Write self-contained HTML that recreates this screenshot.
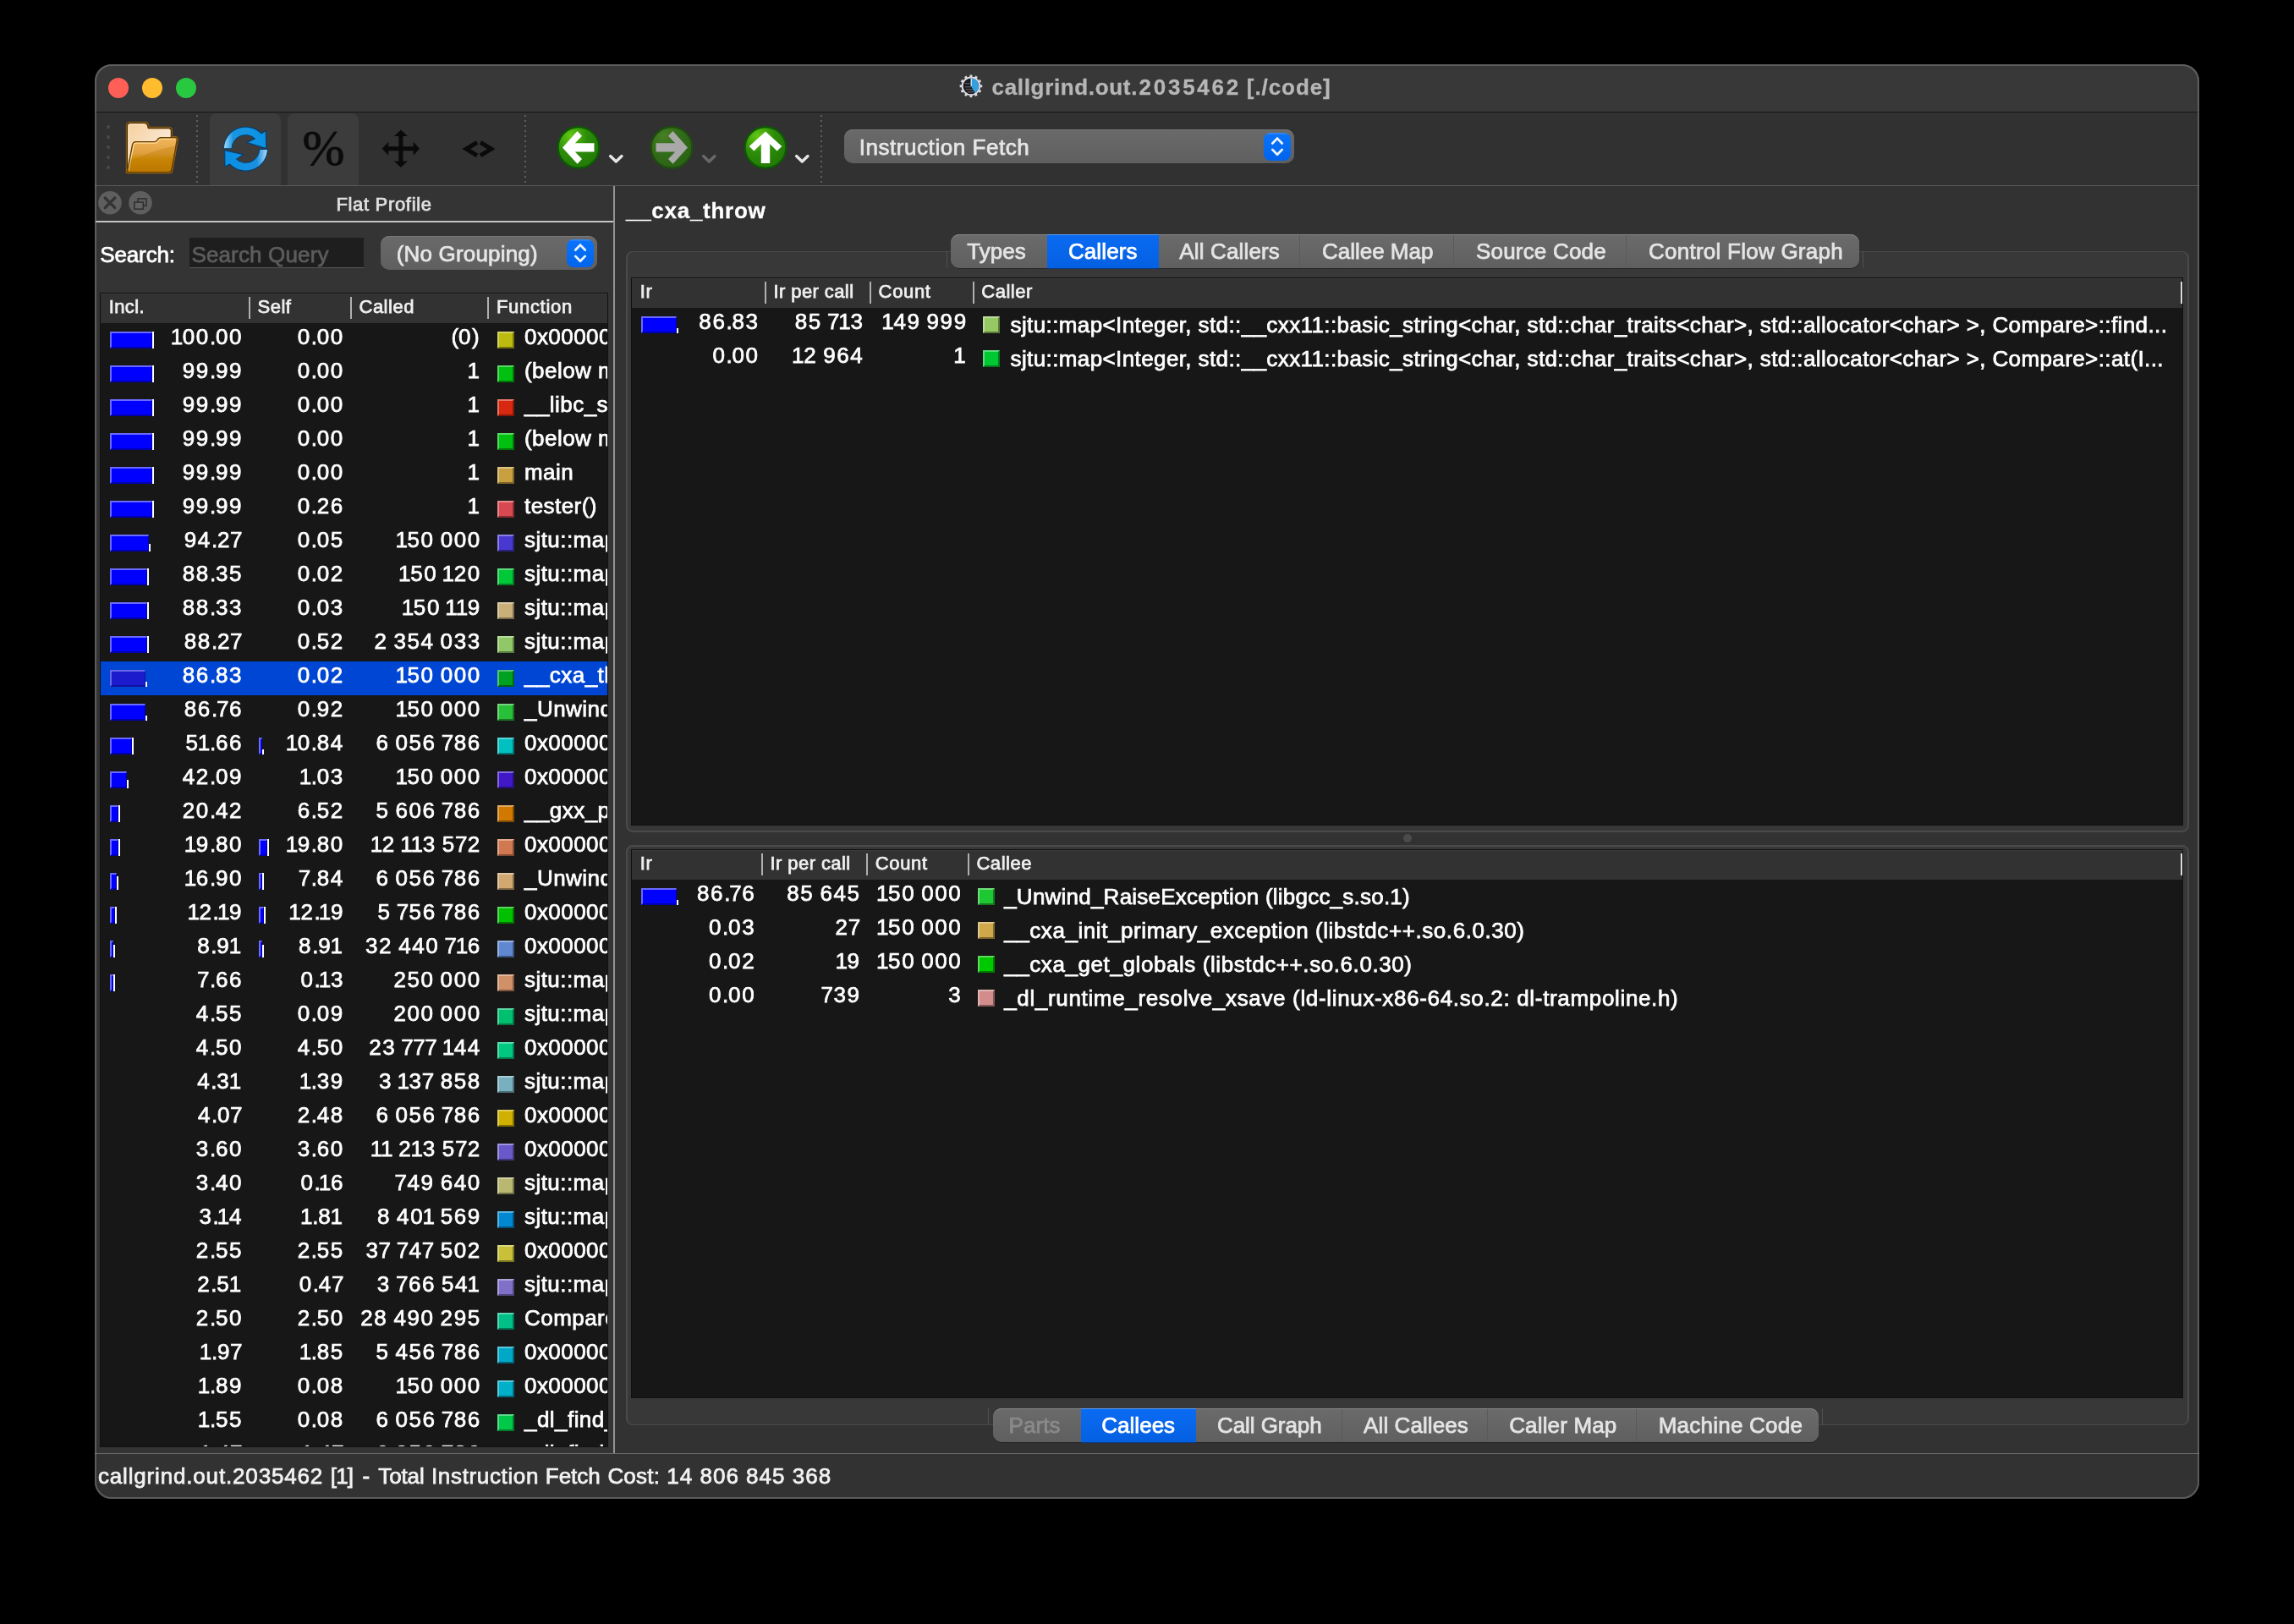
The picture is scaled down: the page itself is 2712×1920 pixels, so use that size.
<!DOCTYPE html>
<html><head><meta charset="utf-8"><title>callgrind.out.2035462 [./code]</title>
<style>
html,body{margin:0;padding:0;background:#000;width:2712px;height:1920px;overflow:hidden;}
body{font-family:"Liberation Sans",sans-serif;}
#win{will-change:transform;position:absolute;left:112px;top:76px;width:2488px;height:1696px;background:#323232;border-radius:20px;overflow:hidden;}
#win div,#win span,#win svg{position:absolute;}
#edge{position:absolute;left:112px;top:76px;width:2488px;height:1696px;border-radius:20px;box-sizing:border-box;border:2px solid rgba(140,140,140,.46);pointer-events:none;}
.t{white-space:pre;line-height:1;color:#fff;-webkit-text-stroke:0.75px currentColor;}
.n{font-size:26px;letter-spacing:1.6px;word-spacing:-1.82px;}
.n u{text-decoration:none;letter-spacing:0.5px;margin-left:-0.96px;}
.n b{font-weight:normal;letter-spacing:-0.36px;margin-left:-1.7px;}
.n i{font-style:normal;letter-spacing:-0.22px;}
.clip{overflow:hidden;}
.hdr{background:#323232;box-shadow:inset 0 1px 0 #3b3b3b;}
.sq{box-sizing:border-box;border-top:2px solid rgba(255,255,255,.36);border-left:2px solid rgba(255,255,255,.36);border-bottom:2px solid rgba(0,0,0,.38);border-right:2px solid rgba(0,0,0,.38);}
.dots{background:repeating-linear-gradient(#5e5e5e 0 2px,transparent 2px 6px);}
.step{background:linear-gradient(#3b8ffb 0,#0a72fa 8%,#0064ec);border-radius:8px;}
</style></head><body>
<div id="win">
<div style="left:0px;top:0px;width:2488px;height:56px;background:#383838;"></div>
<div style="left:0px;top:56px;width:2488px;height:1px;background:#151515;"></div>
<div style="left:16px;top:16px;width:24px;height:24px;background:#ff5f57;border-radius:50%;"></div>
<div style="left:56px;top:16px;width:24px;height:24px;background:#febc2e;border-radius:50%;"></div>
<div style="left:96px;top:16px;width:24px;height:24px;background:#28c840;border-radius:50%;"></div>
<span class="t" style="top:13.79px;font-size:26px;color:#b6b6b6;font-weight:bold;letter-spacing:0.657px;left:1060.60px;-webkit-text-stroke-width:0.3px;">callgrind.out.</span>
<span class="t" style="top:13.79px;font-size:26px;color:#b6b6b6;font-weight:bold;letter-spacing:2.755px;left:1234.50px;-webkit-text-stroke-width:0.3px;">2035462</span>
<span class="t" style="top:13.79px;font-size:26px;color:#b6b6b6;font-weight:bold;letter-spacing:0.928px;left:1361.80px;-webkit-text-stroke-width:0.3px;">[./code]</span>
<svg style="left:1020px;top:10px;" width="32" height="32" viewBox="1132 86 32 32"><rect x="1146.45" y="88.50" width="2.9" height="3.4" fill="#dadae2" transform="rotate(0 1147.9 101.8)"/><rect x="1146.45" y="88.50" width="2.9" height="3.4" fill="#dadae2" transform="rotate(30 1147.9 101.8)"/><rect x="1146.45" y="88.50" width="2.9" height="3.4" fill="#dadae2" transform="rotate(60 1147.9 101.8)"/><rect x="1146.45" y="88.50" width="2.9" height="3.4" fill="#dadae2" transform="rotate(90 1147.9 101.8)"/><rect x="1146.45" y="88.50" width="2.9" height="3.4" fill="#dadae2" transform="rotate(120 1147.9 101.8)"/><rect x="1146.45" y="88.50" width="2.9" height="3.4" fill="#dadae2" transform="rotate(150 1147.9 101.8)"/><rect x="1146.45" y="88.50" width="2.9" height="3.4" fill="#dadae2" transform="rotate(180 1147.9 101.8)"/><rect x="1146.45" y="88.50" width="2.9" height="3.4" fill="#dadae2" transform="rotate(210 1147.9 101.8)"/><rect x="1146.45" y="88.50" width="2.9" height="3.4" fill="#dadae2" transform="rotate(240 1147.9 101.8)"/><rect x="1146.45" y="88.50" width="2.9" height="3.4" fill="#dadae2" transform="rotate(270 1147.9 101.8)"/><rect x="1146.45" y="88.50" width="2.9" height="3.4" fill="#dadae2" transform="rotate(300 1147.9 101.8)"/><rect x="1146.45" y="88.50" width="2.9" height="3.4" fill="#dadae2" transform="rotate(330 1147.9 101.8)"/>
<circle cx="1147.9" cy="101.8" r="10.3" fill="#1b1b1f" stroke="#dadae2" stroke-width="1.9"/>
<path d="M1147.9 101.8 L1147.9 92.6 A9.2 9.2 0 0 1 1152.50 109.77 Z" fill="#379fe0"/>
<path d="M1148.2 92.8 L1148.2 101.8" stroke="#d8f4ff" stroke-width="1.2"/>
<path d="M1140.9 98.8h6M1140.9 102.8h7M1141.9 105.8h8M1143.9 108.8h7" stroke="#8a8a90" stroke-width="1" opacity=".7"/></svg>
<div style="left:0px;top:57px;width:2488px;height:86px;background:#313131;"></div>
<div style="left:0px;top:143px;width:2488px;height:1px;background:#5a5a5a;"></div>
<div style="left:14px;top:72px;width:4px;height:4px;background:#4a4a4a;border-radius:50%;"></div>
<div style="left:14px;top:84px;width:4px;height:4px;background:#4a4a4a;border-radius:50%;"></div>
<div style="left:14px;top:96px;width:4px;height:4px;background:#4a4a4a;border-radius:50%;"></div>
<div style="left:14px;top:108px;width:4px;height:4px;background:#4a4a4a;border-radius:50%;"></div>
<div style="left:14px;top:120px;width:4px;height:4px;background:#4a4a4a;border-radius:50%;"></div>
<div class="dots" style="left:120px;top:60px;width:2px;height:80px;"></div>
<div class="dots" style="left:508px;top:60px;width:2px;height:80px;"></div>
<div class="dots" style="left:858px;top:60px;width:2px;height:80px;"></div>
<div style="left:136px;top:58px;width:84px;height:85px;background:#3c3c3c;border-radius:8px 8px 0 0;"></div>
<div style="left:228px;top:58px;width:84px;height:85px;background:#3c3c3c;border-radius:8px 8px 0 0;"></div>
<svg style="left:34px;top:65px;" width="68" height="66" viewBox="146 141 68 66"><defs>
<linearGradient id="fb" x1="0" y1="0" x2="1" y2="1"><stop offset="0" stop-color="#f5cf98"/><stop offset=".6" stop-color="#fae6d2"/><stop offset="1" stop-color="#f8e0c0"/></linearGradient>
<linearGradient id="ff" x1="0" y1="0" x2="0" y2="1"><stop offset="0" stop-color="#f3b75c"/><stop offset=".45" stop-color="#dfa040"/><stop offset=".62" stop-color="#cc8a08"/><stop offset="1" stop-color="#b97500"/></linearGradient>
</defs>
<path d="M150.5 203 L150.5 148.5 Q150.5 145.5 153.5 145.5 L171.5 145.5 Q174 145.5 174.5 148 L175.5 151.5 L199.5 151.5 Q202.5 151.5 202.5 154.5 L202.5 203 Z" fill="none" stroke="#c98a10" stroke-width="3.4" stroke-linejoin="round" opacity=".55"/>
<path d="M150.3 203.6 L156.6 171 Q157.4 167.6 160.5 167.6 L183 167.6 Q185 167.6 186 165.5 Q187.4 162.7 190.5 162.7 L207 162.7 Q209.6 162.7 209.2 165.5 L203 200 Q202.3 203.6 199 203.6 Z" fill="none" stroke="#c98a10" stroke-width="3.4" stroke-linejoin="round" opacity=".55"/>
<path d="M150.5 203 L150.5 148.5 Q150.5 145.5 153.5 145.5 L171.5 145.5 Q174 145.5 174.5 148 L175.5 151.5 L199.5 151.5 Q202.5 151.5 202.5 154.5 L202.5 203 Z" fill="url(#fb)" stroke="#5a3200" stroke-width="1.6" stroke-linejoin="round"/>
<path d="M152 201 L152 149 Q152 147 154 147 L171 147" fill="none" stroke="#fff6e0" stroke-width="1.2" opacity=".9"/>
<path d="M150.3 203.6 L156.6 171 Q157.4 167.6 160.5 167.6 L183 167.6 Q185 167.6 186 165.5 Q187.4 162.7 190.5 162.7 L207 162.7 Q209.6 162.7 209.2 165.5 L203 200 Q202.3 203.6 199 203.6 Z" fill="url(#ff)" stroke="#6a3c00" stroke-width="1.4" stroke-linejoin="round"/>
<path d="M152.2 201.5 L158 171.6 Q158.6 169.2 161 169.2 L183.5 169.2 Q186 169.2 187.2 166.8 Q188.2 164.3 191 164.3 L207.5 164.3" fill="none" stroke="#ffe9b0" stroke-width="1.1" opacity=".85"/>
<path d="M152 203 L154.5 190 Q180 178 206.5 172.5 L202 200 Q201.6 203 199 203 Z" fill="#c07c00" opacity=".35"/></svg>
<svg style="left:148px;top:70px;" width="62" height="62" viewBox="260 146 62 62"><defs>
<linearGradient id="ru" x1="0" y1="0" x2="1" y2="0"><stop offset="0" stop-color="#a9dcf7"/><stop offset=".22" stop-color="#1a95e0"/><stop offset="1" stop-color="#0a92e6"/></linearGradient>
<linearGradient id="rd" x1="1" y1="0" x2="0" y2="0"><stop offset="0" stop-color="#b4dcf8"/><stop offset=".25" stop-color="#1a8fe0"/><stop offset="1" stop-color="#0a90e4"/></linearGradient>
</defs>
<path d="M264.40 175.55 A26.0 26.0 0 0 1 309.10 157.94 L314.2 154.3 L314.8 175.5 L292 168.6 L301.31 163.89 A16.3 16.3 0 0 0 274.10 175.72 Z" fill="url(#ru)" stroke="#053f6e" stroke-width="1.1" stroke-linejoin="round"/>
<path d="M316.40 176.45 A26.0 26.0 0 0 1 271.70 194.06 L266.0 197.0 L265.6 177.6 L287.6 182.6 L279.49 188.11 A16.3 16.3 0 0 0 306.70 176.28 Z" fill="url(#rd)" stroke="#053f6e" stroke-width="1.1" stroke-linejoin="round"/></svg>
<span class="t" style="left:245.5px;top:69px;font-family:'Liberation Serif',serif;font-size:60px;color:#0b0b0b;line-height:1;-webkit-text-stroke:0.8px #0b0b0b;">%</span>
<svg style="left:336px;top:74px;" width="52" height="52" viewBox="448 150 52 52"><path transform="rotate(0 473.9 175.8)" d="M471.4 175.8 L471.4 161.10000000000002 L465.9 161.10000000000002 L473.9 153.60000000000002 L481.9 161.10000000000002 L476.4 161.10000000000002 L476.4 175.8 Z" fill="#0a0a0a"/><path transform="rotate(90 473.9 175.8)" d="M471.4 175.8 L471.4 161.10000000000002 L465.9 161.10000000000002 L473.9 153.60000000000002 L481.9 161.10000000000002 L476.4 161.10000000000002 L476.4 175.8 Z" fill="#0a0a0a"/><path transform="rotate(180 473.9 175.8)" d="M471.4 175.8 L471.4 161.10000000000002 L465.9 161.10000000000002 L473.9 153.60000000000002 L481.9 161.10000000000002 L476.4 161.10000000000002 L476.4 175.8 Z" fill="#0a0a0a"/><path transform="rotate(270 473.9 175.8)" d="M471.4 175.8 L471.4 161.10000000000002 L465.9 161.10000000000002 L473.9 153.60000000000002 L481.9 161.10000000000002 L476.4 161.10000000000002 L476.4 175.8 Z" fill="#0a0a0a"/></svg>
<svg style="left:428px;top:84px;" width="52" height="32" viewBox="540 160 52 32"><path d="M564 168.4 L551.3 176.1 L564 183.8" fill="none" stroke="#0a0a0a" stroke-width="5"/><path d="M568 168.4 L580.7 176.1 L568 183.8" fill="none" stroke="#0a0a0a" stroke-width="5"/></svg>
<svg style="left:544.3px;top:70px;" width="56" height="58" viewBox="656.3 146 56 58"><defs><radialGradient id="gl" cx=".3" cy=".22" r=".75"><stop offset="0" stop-color="#62c812"/><stop offset=".55" stop-color="#2e8c0a"/><stop offset="1" stop-color="#237d06"/></radialGradient></defs><circle cx="684.3" cy="174.4" r="24.3" fill="url(#gl)" stroke="#0b5a02" stroke-width="2.2"/><polygon points="665.3,174.4 682.8,155.1 688.3,160.8 680.1,169.2 702.8,169.2 702.8,179.6 680.1,179.6 688.3,188.0 682.8,193.7" fill="#ffffff" transform="rotate(0 684.3 174.4)"/></svg>
<svg style="left:605.7px;top:104px;" width="22" height="16" viewBox="717.7 180 22 16"><path d="M721.3000000000001 184.6 L728.0 191 L734.7 184.6" fill="none" stroke="#e6e6e6" stroke-width="3.4" stroke-linecap="round" stroke-linejoin="round"/></svg>
<svg style="left:654.4px;top:70px;" width="56" height="58" viewBox="766.4 146 56 58"><defs><radialGradient id="gr" cx=".3" cy=".22" r=".75"><stop offset="0" stop-color="#467f24"/><stop offset=".55" stop-color="#336c1a"/><stop offset="1" stop-color="#2c6416"/></radialGradient></defs><circle cx="794.4" cy="174.4" r="24.3" fill="url(#gr)" stroke="#1d4f0c" stroke-width="2.2"/><polygon points="775.4,174.4 792.9,155.1 798.4,160.8 790.2,169.2 812.9,169.2 812.9,179.6 790.2,179.6 798.4,188.0 792.9,193.7" fill="#a9a9a9" transform="rotate(180 794.4 174.4)"/></svg>
<svg style="left:715.8px;top:104px;" width="22" height="16" viewBox="827.8 180 22 16"><path d="M831.4 184.6 L838.0999999999999 191 L844.8 184.6" fill="none" stroke="#686868" stroke-width="3.4" stroke-linecap="round" stroke-linejoin="round"/></svg>
<svg style="left:764.5px;top:70px;" width="56" height="58" viewBox="876.5 146 56 58"><defs><radialGradient id="gu" cx=".3" cy=".22" r=".75"><stop offset="0" stop-color="#62c812"/><stop offset=".55" stop-color="#2e8c0a"/><stop offset="1" stop-color="#237d06"/></radialGradient></defs><circle cx="904.5" cy="174.4" r="24.3" fill="url(#gu)" stroke="#0b5a02" stroke-width="2.2"/><polygon points="885.5,174.4 903.0,155.1 908.5,160.8 900.3,169.2 923.0,169.2 923.0,179.6 900.3,179.6 908.5,188.0 903.0,193.7" fill="#ffffff" transform="rotate(90 904.5 174.4)"/></svg>
<svg style="left:825.7px;top:104px;" width="22" height="16" viewBox="937.7 180 22 16"><path d="M941.3000000000001 184.6 L948.0 191 L954.7 184.6" fill="none" stroke="#e6e6e6" stroke-width="3.4" stroke-linecap="round" stroke-linejoin="round"/></svg>
<div style="left:886px;top:77px;width:532px;height:40px;background:linear-gradient(#6a6a6a,#5f5f5f);border-radius:10px;box-shadow:inset 0 1px 0 #787878;"></div>
<div class="step" style="left:1382px;top:81px;width:32px;height:33px;"></div>
<svg style="left:1382px;top:81px;" width="32" height="33" viewBox="1494 157 32 33"><path d="M1504.3 169.5 L1510 163.6 L1515.7 169.5 M1504.3 176.9 L1510 182.8 L1515.7 176.9" fill="none" stroke="#eaf5ff" stroke-width="2.8" stroke-linecap="round" stroke-linejoin="round"/></svg>
<span class="t" style="top:84.99px;font-size:26px;color:#e6e6e6;letter-spacing:0.555px;left:903.70px;">Instruction Fetch</span>
<div style="left:1px;top:144px;width:612px;height:1498px;background:#343434;"></div>
<div style="left:613px;top:144px;width:2px;height:1498px;background:#939393;"></div>
<div style="left:1px;top:185px;width:612px;height:2px;background:#c4c4c4;"></div>
<span class="t" style="top:155.18px;font-size:22px;color:#e0e0e0;letter-spacing:0.678px;left:285.40px;">Flat Profile</span>
<svg style="left:3px;top:149px;" width="30" height="30" viewBox="115 225 30 30"><circle cx="130" cy="239.8" r="13.8" fill="#5e5e5e"/><path d="M124.2 234 L135.8 245.6 M135.8 234 L124.2 245.6" stroke="#333" stroke-width="3.2" stroke-linecap="round"/></svg><svg style="left:39px;top:149px;" width="30" height="30" viewBox="151 225 30 30"><circle cx="166" cy="239.8" r="13.8" fill="#5e5e5e"/><rect x="163" y="234.9" width="10" height="8.4" fill="none" stroke="#303030" stroke-width="1.6"/><rect x="158.9" y="239" width="10.4" height="8.2" fill="#626262" stroke="#303030" stroke-width="1.6"/></svg>
<span class="t" style="top:211.99px;font-size:26px;color:#fff;letter-spacing:-0.146px;left:6.30px;">Search:</span>
<div style="left:112px;top:205px;width:206px;height:36px;background:#1e1e1e;border-bottom:1px solid #555;box-sizing:border-box;"></div>
<span class="t" style="top:211.99px;font-size:26px;color:#5c5c5c;letter-spacing:0.149px;left:114.40px;">Search Query</span>
<div style="left:338px;top:203px;width:256px;height:40px;background:linear-gradient(#6a6a6a,#5f5f5f);border-radius:10px;box-shadow:inset 0 1px 0 #787878;"></div>
<div class="step" style="left:558px;top:207px;width:32px;height:33px;"></div>
<svg style="left:558px;top:207px;" width="32" height="33" viewBox="670 283 32 33"><path d="M680.3 295.5 L686 289.6 L691.7 295.5 M680.3 302.9 L686 308.8 L691.7 302.9" fill="none" stroke="#eaf5ff" stroke-width="2.8" stroke-linecap="round" stroke-linejoin="round"/></svg>
<span class="t" style="top:210.99px;font-size:26px;color:#e6e6e6;letter-spacing:0.168px;left:356.80px;">(No Grouping)</span>
<div style="left:6px;top:270px;width:601px;height:1365px;background:#171717;border:1px solid #111;box-sizing:border-box;overflow:hidden;"></div>
<div class="hdr" style="left:7px;top:271px;width:599px;height:35px;"></div>
<div style="left:182px;top:275px;width:2px;height:26px;background:#b0b0b0;"></div>
<div style="left:302px;top:275px;width:2px;height:26px;background:#b0b0b0;"></div>
<div style="left:464px;top:275px;width:2px;height:26px;background:#b0b0b0;"></div>
<span class="t" style="top:276.08px;font-size:22px;color:#f0f0f0;letter-spacing:0.403px;left:16.70px;">Incl.</span>
<span class="t" style="top:276.08px;font-size:22px;color:#f0f0f0;letter-spacing:0.505px;left:192.50px;">Self</span>
<span class="t" style="top:276.08px;font-size:22px;color:#f0f0f0;letter-spacing:0.499px;left:312.50px;">Called</span>
<span class="t" style="top:276.08px;font-size:22px;color:#f0f0f0;letter-spacing:0.699px;left:474.90px;">Function</span>
<div class="clip" style="left:7px;top:306px;width:599px;height:1328px;">
<div style="left:11px;top:10px;width:50px;height:20px;background:#0000ff;box-sizing:border-box;border-top:2px solid #6a6aff;border-left:2px solid #6a6aff;border-bottom:2px solid #0000b0;border-right:1px solid #0000b0;"></div>
<div style="left:61px;top:10px;width:2px;height:20px;background:#fff;"></div>
<span class="t n" style="left:84.36px;top:3.29px;"><b>1</b>00<i>.</i>00</span>
<span class="t n" style="left:232.72px;top:3.29px;">0<i>.</i>00</span>
<span class="t n" style="left:414.54px;top:3.29px;"><i>(</i>0<i>)</i></span>
<div class="sq" style="left:469px;top:10px;width:20px;height:20px;background:#bcbc10;"></div>
<span class="t" style="left:501.00px;top:3.29px;font-size:26px;letter-spacing:.45px;">0x00000</span>
<div style="left:11px;top:50px;width:50px;height:20px;background:#0000ff;box-sizing:border-box;border-top:2px solid #6a6aff;border-left:2px solid #6a6aff;border-bottom:2px solid #0000b0;border-right:1px solid #0000b0;"></div>
<div style="left:61px;top:50px;width:2px;height:20px;background:#fff;"></div>
<span class="t n" style="left:96.76px;top:43.29px;">99<i>.</i>99</span>
<span class="t n" style="left:232.72px;top:43.29px;">0<i>.</i>00</span>
<span class="t n" style="left:435.10px;top:43.29px;"><b>1</b></span>
<div class="sq" style="left:469px;top:50px;width:20px;height:20px;background:#00c010;"></div>
<span class="t" style="left:501.00px;top:43.29px;font-size:26px;letter-spacing:.45px;">(below m</span>
<div style="left:11px;top:90px;width:50px;height:20px;background:#0000ff;box-sizing:border-box;border-top:2px solid #6a6aff;border-left:2px solid #6a6aff;border-bottom:2px solid #0000b0;border-right:1px solid #0000b0;"></div>
<div style="left:61px;top:90px;width:2px;height:20px;background:#fff;"></div>
<span class="t n" style="left:96.76px;top:83.29px;">99<i>.</i>99</span>
<span class="t n" style="left:232.72px;top:83.29px;">0<i>.</i>00</span>
<span class="t n" style="left:435.10px;top:83.29px;"><b>1</b></span>
<div class="sq" style="left:469px;top:90px;width:20px;height:20px;background:#d82810;"></div>
<span class="t" style="left:501.00px;top:83.29px;font-size:26px;letter-spacing:.45px;">__libc_s</span>
<div style="left:11px;top:130px;width:50px;height:20px;background:#0000ff;box-sizing:border-box;border-top:2px solid #6a6aff;border-left:2px solid #6a6aff;border-bottom:2px solid #0000b0;border-right:1px solid #0000b0;"></div>
<div style="left:61px;top:130px;width:2px;height:20px;background:#fff;"></div>
<span class="t n" style="left:96.76px;top:123.29px;">99<i>.</i>99</span>
<span class="t n" style="left:232.72px;top:123.29px;">0<i>.</i>00</span>
<span class="t n" style="left:435.10px;top:123.29px;"><b>1</b></span>
<div class="sq" style="left:469px;top:130px;width:20px;height:20px;background:#00c010;"></div>
<span class="t" style="left:501.00px;top:123.29px;font-size:26px;letter-spacing:.45px;">(below m</span>
<div style="left:11px;top:170px;width:50px;height:20px;background:#0000ff;box-sizing:border-box;border-top:2px solid #6a6aff;border-left:2px solid #6a6aff;border-bottom:2px solid #0000b0;border-right:1px solid #0000b0;"></div>
<div style="left:61px;top:170px;width:2px;height:20px;background:#fff;"></div>
<span class="t n" style="left:96.76px;top:163.29px;">99<i>.</i>99</span>
<span class="t n" style="left:232.72px;top:163.29px;">0<i>.</i>00</span>
<span class="t n" style="left:435.10px;top:163.29px;"><b>1</b></span>
<div class="sq" style="left:469px;top:170px;width:20px;height:20px;background:#c8a040;"></div>
<span class="t" style="left:501.00px;top:163.29px;font-size:26px;letter-spacing:.45px;">main</span>
<div style="left:11px;top:210px;width:50px;height:20px;background:#0000ff;box-sizing:border-box;border-top:2px solid #6a6aff;border-left:2px solid #6a6aff;border-bottom:2px solid #0000b0;border-right:1px solid #0000b0;"></div>
<div style="left:61px;top:210px;width:2px;height:20px;background:#fff;"></div>
<span class="t n" style="left:96.76px;top:203.29px;">99<i>.</i>99</span>
<span class="t n" style="left:232.72px;top:203.29px;">0<i>.</i>26</span>
<span class="t n" style="left:435.10px;top:203.29px;"><b>1</b></span>
<div class="sq" style="left:469px;top:210px;width:20px;height:20px;background:#d84850;"></div>
<span class="t" style="left:501.00px;top:203.29px;font-size:26px;letter-spacing:.45px;">tester()</span>
<div style="left:11px;top:250px;width:46px;height:20px;background:#0000ff;box-sizing:border-box;border-top:2px solid #6a6aff;border-left:2px solid #6a6aff;border-bottom:2px solid #0000b0;border-right:1px solid #0000b0;"></div>
<div style="left:57px;top:261px;width:2px;height:9px;background:#fff;"></div>
<span class="t n" style="left:98.82px;top:243.29px;">94<i>.</i>2<u>7</u></span>
<span class="t n" style="left:232.72px;top:243.29px;">0<i>.</i>05</span>
<span class="t n" style="left:350.10px;top:243.29px;"><b>1</b>50 000</span>
<div class="sq" style="left:469px;top:250px;width:20px;height:20px;background:#4838d0;"></div>
<span class="t" style="left:501.00px;top:243.29px;font-size:26px;letter-spacing:.45px;">sjtu::map</span>
<div style="left:11px;top:290px;width:44px;height:20px;background:#0000ff;box-sizing:border-box;border-top:2px solid #6a6aff;border-left:2px solid #6a6aff;border-bottom:2px solid #0000b0;border-right:1px solid #0000b0;"></div>
<div style="left:55px;top:290px;width:2px;height:20px;background:#fff;"></div>
<span class="t n" style="left:96.76px;top:283.29px;">88<i>.</i>35</span>
<span class="t n" style="left:232.72px;top:283.29px;">0<i>.</i>02</span>
<span class="t n" style="left:353.76px;top:283.29px;"><b>1</b>50 <b>1</b>20</span>
<div class="sq" style="left:469px;top:290px;width:20px;height:20px;background:#00c838;"></div>
<span class="t" style="left:501.00px;top:283.29px;font-size:26px;letter-spacing:.45px;">sjtu::map</span>
<div style="left:11px;top:330px;width:44px;height:20px;background:#0000ff;box-sizing:border-box;border-top:2px solid #6a6aff;border-left:2px solid #6a6aff;border-bottom:2px solid #0000b0;border-right:1px solid #0000b0;"></div>
<div style="left:55px;top:330px;width:2px;height:20px;background:#fff;"></div>
<span class="t n" style="left:96.76px;top:323.29px;">88<i>.</i>33</span>
<span class="t n" style="left:232.72px;top:323.29px;">0<i>.</i>03</span>
<span class="t n" style="left:357.42px;top:323.29px;"><b>1</b>50 <b>1</b><b>1</b>9</span>
<div class="sq" style="left:469px;top:330px;width:20px;height:20px;background:#c8b078;"></div>
<span class="t" style="left:501.00px;top:323.29px;font-size:26px;letter-spacing:.45px;">sjtu::map</span>
<div style="left:11px;top:370px;width:44px;height:20px;background:#0000ff;box-sizing:border-box;border-top:2px solid #6a6aff;border-left:2px solid #6a6aff;border-bottom:2px solid #0000b0;border-right:1px solid #0000b0;"></div>
<div style="left:55px;top:370px;width:2px;height:20px;background:#fff;"></div>
<span class="t n" style="left:98.82px;top:363.29px;">88<i>.</i>2<u>7</u></span>
<span class="t n" style="left:232.72px;top:363.29px;">0<i>.</i>52</span>
<span class="t n" style="left:323.38px;top:363.29px;">2 354 033</span>
<div class="sq" style="left:469px;top:370px;width:20px;height:20px;background:#90c868;"></div>
<span class="t" style="left:501.00px;top:363.29px;font-size:26px;letter-spacing:.45px;">sjtu::map</span>
<div style="left:0;top:400px;width:599px;height:40px;background:#0046d4;"></div>
<div style="left:11px;top:410px;width:42px;height:20px;background:#1c1ccc;box-sizing:border-box;border-top:2px solid #6868e8;border-left:2px solid #6868e8;border-bottom:2px solid #1010a0;border-right:1px solid #1010a0;"></div>
<div style="left:53px;top:424px;width:2px;height:6px;background:#fff;"></div>
<span class="t n" style="left:96.76px;top:403.29px;">86<i>.</i>83</span>
<span class="t n" style="left:232.72px;top:403.29px;">0<i>.</i>02</span>
<span class="t n" style="left:350.10px;top:403.29px;"><b>1</b>50 000</span>
<div class="sq" style="left:469px;top:410px;width:20px;height:20px;background:#00a020;"></div>
<span class="t" style="left:501.00px;top:403.29px;font-size:26px;letter-spacing:.45px;">__cxa_th</span>
<div style="left:11px;top:450px;width:42px;height:20px;background:#0000ff;box-sizing:border-box;border-top:2px solid #6a6aff;border-left:2px solid #6a6aff;border-bottom:2px solid #0000b0;border-right:1px solid #0000b0;"></div>
<div style="left:53px;top:464px;width:2px;height:6px;background:#fff;"></div>
<span class="t n" style="left:98.82px;top:443.29px;">86<i>.</i><u>7</u>6</span>
<span class="t n" style="left:232.72px;top:443.29px;">0<i>.</i>92</span>
<span class="t n" style="left:350.10px;top:443.29px;"><b>1</b>50 000</span>
<div class="sq" style="left:469px;top:450px;width:20px;height:20px;background:#28c038;"></div>
<span class="t" style="left:501.00px;top:443.29px;font-size:26px;letter-spacing:.45px;">_Unwind</span>
<div style="left:11px;top:490px;width:26px;height:20px;background:#0000ff;box-sizing:border-box;border-top:2px solid #6a6aff;border-left:2px solid #6a6aff;border-bottom:2px solid #0000b0;border-right:1px solid #0000b0;"></div>
<div style="left:37px;top:490px;width:2px;height:20px;background:#fff;"></div>
<div style="left:187px;top:490px;width:4px;height:20px;background:#0000ff;box-sizing:border-box;border-top:2px solid #6a6aff;border-left:2px solid #6a6aff;border-bottom:2px solid #0000b0;border-right:1px solid #0000b0;"></div>
<div style="left:191px;top:504px;width:2px;height:6px;background:#fff;"></div>
<span class="t n" style="left:100.42px;top:483.29px;">5<b>1</b><i>.</i>66</span>
<span class="t n" style="left:220.32px;top:483.29px;"><b>1</b>0<i>.</i>84</span>
<span class="t n" style="left:325.44px;top:483.29px;">6 056 <u>7</u>86</span>
<div class="sq" style="left:469px;top:490px;width:20px;height:20px;background:#00c0c0;"></div>
<span class="t" style="left:501.00px;top:483.29px;font-size:26px;letter-spacing:.45px;">0x00000</span>
<div style="left:11px;top:530px;width:20px;height:20px;background:#0000ff;box-sizing:border-box;border-top:2px solid #6a6aff;border-left:2px solid #6a6aff;border-bottom:2px solid #0000b0;border-right:1px solid #0000b0;"></div>
<div style="left:31px;top:540px;width:2px;height:10px;background:#fff;"></div>
<span class="t n" style="left:96.76px;top:523.29px;">42<i>.</i>09</span>
<span class="t n" style="left:236.38px;top:523.29px;"><b>1</b><i>.</i>03</span>
<span class="t n" style="left:350.10px;top:523.29px;"><b>1</b>50 000</span>
<div class="sq" style="left:469px;top:530px;width:20px;height:20px;background:#4018c8;"></div>
<span class="t" style="left:501.00px;top:523.29px;font-size:26px;letter-spacing:.45px;">0x00000</span>
<div style="left:11px;top:570px;width:10px;height:20px;background:#0000ff;box-sizing:border-box;border-top:2px solid #6a6aff;border-left:2px solid #6a6aff;border-bottom:2px solid #0000b0;border-right:1px solid #0000b0;"></div>
<div style="left:21px;top:570px;width:2px;height:20px;background:#fff;"></div>
<span class="t n" style="left:96.76px;top:563.29px;">20<i>.</i>42</span>
<span class="t n" style="left:232.72px;top:563.29px;">6<i>.</i>52</span>
<span class="t n" style="left:325.44px;top:563.29px;">5 606 <u>7</u>86</span>
<div class="sq" style="left:469px;top:570px;width:20px;height:20px;background:#d07800;"></div>
<span class="t" style="left:501.00px;top:563.29px;font-size:26px;letter-spacing:.45px;">__gxx_p</span>
<div style="left:11px;top:610px;width:10px;height:20px;background:#0000ff;box-sizing:border-box;border-top:2px solid #6a6aff;border-left:2px solid #6a6aff;border-bottom:2px solid #0000b0;border-right:1px solid #0000b0;"></div>
<div style="left:21px;top:610px;width:2px;height:20px;background:#fff;"></div>
<div style="left:187px;top:610px;width:10px;height:20px;background:#0000ff;box-sizing:border-box;border-top:2px solid #6a6aff;border-left:2px solid #6a6aff;border-bottom:2px solid #0000b0;border-right:1px solid #0000b0;"></div>
<div style="left:197px;top:610px;width:2px;height:20px;background:#fff;"></div>
<span class="t n" style="left:100.42px;top:603.29px;"><b>1</b>9<i>.</i>80</span>
<span class="t n" style="left:220.32px;top:603.29px;"><b>1</b>9<i>.</i>80</span>
<span class="t n" style="left:320.36px;top:603.29px;"><b>1</b>2 <b>1</b><b>1</b>3 5<u>7</u>2</span>
<div class="sq" style="left:469px;top:610px;width:20px;height:20px;background:#d07850;"></div>
<span class="t" style="left:501.00px;top:603.29px;font-size:26px;letter-spacing:.45px;">0x00000</span>
<div style="left:11px;top:650px;width:8px;height:20px;background:#0000ff;box-sizing:border-box;border-top:2px solid #6a6aff;border-left:2px solid #6a6aff;border-bottom:2px solid #0000b0;border-right:1px solid #0000b0;"></div>
<div style="left:19px;top:654px;width:2px;height:16px;background:#fff;"></div>
<div style="left:187px;top:650px;width:4px;height:20px;background:#0000ff;box-sizing:border-box;border-top:2px solid #6a6aff;border-left:2px solid #6a6aff;border-bottom:2px solid #0000b0;border-right:1px solid #0000b0;"></div>
<div style="left:191px;top:650px;width:2px;height:20px;background:#fff;"></div>
<span class="t n" style="left:100.42px;top:643.29px;"><b>1</b>6<i>.</i>90</span>
<span class="t n" style="left:234.78px;top:643.29px;"><u>7</u><i>.</i>84</span>
<span class="t n" style="left:325.44px;top:643.29px;">6 056 <u>7</u>86</span>
<div class="sq" style="left:469px;top:650px;width:20px;height:20px;background:#d0a870;"></div>
<span class="t" style="left:501.00px;top:643.29px;font-size:26px;letter-spacing:.45px;">_Unwind</span>
<div style="left:11px;top:690px;width:6px;height:20px;background:#0000ff;box-sizing:border-box;border-top:2px solid #6a6aff;border-left:2px solid #6a6aff;border-bottom:2px solid #0000b0;border-right:1px solid #0000b0;"></div>
<div style="left:17px;top:690px;width:2px;height:20px;background:#fff;"></div>
<div style="left:187px;top:690px;width:6px;height:20px;background:#0000ff;box-sizing:border-box;border-top:2px solid #6a6aff;border-left:2px solid #6a6aff;border-bottom:2px solid #0000b0;border-right:1px solid #0000b0;"></div>
<div style="left:193px;top:690px;width:2px;height:20px;background:#fff;"></div>
<span class="t n" style="left:104.08px;top:683.29px;"><b>1</b>2<i>.</i><b>1</b>9</span>
<span class="t n" style="left:223.98px;top:683.29px;"><b>1</b>2<i>.</i><b>1</b>9</span>
<span class="t n" style="left:327.50px;top:683.29px;">5 <u>7</u>56 <u>7</u>86</span>
<div class="sq" style="left:469px;top:690px;width:20px;height:20px;background:#00c000;"></div>
<span class="t" style="left:501.00px;top:683.29px;font-size:26px;letter-spacing:.45px;">0x00000</span>
<div style="left:11px;top:730px;width:4px;height:20px;background:#0000ff;box-sizing:border-box;border-top:2px solid #6a6aff;border-left:2px solid #6a6aff;border-bottom:2px solid #0000b0;border-right:1px solid #0000b0;"></div>
<div style="left:15px;top:735px;width:2px;height:15px;background:#fff;"></div>
<div style="left:187px;top:730px;width:4px;height:20px;background:#0000ff;box-sizing:border-box;border-top:2px solid #6a6aff;border-left:2px solid #6a6aff;border-bottom:2px solid #0000b0;border-right:1px solid #0000b0;"></div>
<div style="left:191px;top:735px;width:2px;height:15px;background:#fff;"></div>
<span class="t n" style="left:114.18px;top:723.29px;">8<i>.</i>9<b>1</b></span>
<span class="t n" style="left:234.08px;top:723.29px;">8<i>.</i>9<b>1</b></span>
<span class="t n" style="left:313.04px;top:723.29px;">32 440 <u>7</u><b>1</b>6</span>
<div class="sq" style="left:469px;top:730px;width:20px;height:20px;background:#6088d0;"></div>
<span class="t" style="left:501.00px;top:723.29px;font-size:26px;letter-spacing:.45px;">0x00000</span>
<div style="left:11px;top:770px;width:4px;height:20px;background:#0000ff;box-sizing:border-box;border-top:2px solid #6a6aff;border-left:2px solid #6a6aff;border-bottom:2px solid #0000b0;border-right:1px solid #0000b0;"></div>
<div style="left:15px;top:770px;width:2px;height:20px;background:#fff;"></div>
<span class="t n" style="left:114.88px;top:763.29px;"><u>7</u><i>.</i>66</span>
<span class="t n" style="left:236.38px;top:763.29px;">0<i>.</i><b>1</b>3</span>
<span class="t n" style="left:346.44px;top:763.29px;">250 000</span>
<div class="sq" style="left:469px;top:770px;width:20px;height:20px;background:#d09068;"></div>
<span class="t" style="left:501.00px;top:763.29px;font-size:26px;letter-spacing:.45px;">sjtu::map</span>
<span class="t n" style="left:112.82px;top:803.29px;">4<i>.</i>55</span>
<span class="t n" style="left:232.72px;top:803.29px;">0<i>.</i>09</span>
<span class="t n" style="left:346.44px;top:803.29px;">200 000</span>
<div class="sq" style="left:469px;top:810px;width:20px;height:20px;background:#00c070;"></div>
<span class="t" style="left:501.00px;top:803.29px;font-size:26px;letter-spacing:.45px;">sjtu::map</span>
<span class="t n" style="left:112.82px;top:843.29px;">4<i>.</i>50</span>
<span class="t n" style="left:232.72px;top:843.29px;">4<i>.</i>50</span>
<span class="t n" style="left:317.16px;top:843.29px;">23 <u>7</u><u>7</u><u>7</u> <b>1</b>44</span>
<div class="sq" style="left:469px;top:850px;width:20px;height:20px;background:#00c880;"></div>
<span class="t" style="left:501.00px;top:843.29px;font-size:26px;letter-spacing:.45px;">0x00000</span>
<span class="t n" style="left:114.18px;top:883.29px;">4<i>.</i>3<b>1</b></span>
<span class="t n" style="left:236.38px;top:883.29px;"><b>1</b><i>.</i>39</span>
<span class="t n" style="left:329.10px;top:883.29px;">3 <b>1</b>3<u>7</u> 858</span>
<div class="sq" style="left:469px;top:890px;width:20px;height:20px;background:#78b0c0;"></div>
<span class="t" style="left:501.00px;top:883.29px;font-size:26px;letter-spacing:.45px;">sjtu::map</span>
<span class="t n" style="left:114.88px;top:923.29px;">4<i>.</i>0<u>7</u></span>
<span class="t n" style="left:232.72px;top:923.29px;">2<i>.</i>48</span>
<span class="t n" style="left:325.44px;top:923.29px;">6 056 <u>7</u>86</span>
<div class="sq" style="left:469px;top:930px;width:20px;height:20px;background:#d0b000;"></div>
<span class="t" style="left:501.00px;top:923.29px;font-size:26px;letter-spacing:.45px;">0x00000</span>
<span class="t n" style="left:112.82px;top:963.29px;">3<i>.</i>60</span>
<span class="t n" style="left:232.72px;top:963.29px;">3<i>.</i>60</span>
<span class="t n" style="left:320.36px;top:963.29px;"><b>1</b><b>1</b> 2<b>1</b>3 5<u>7</u>2</span>
<div class="sq" style="left:469px;top:970px;width:20px;height:20px;background:#6858c8;"></div>
<span class="t" style="left:501.00px;top:963.29px;font-size:26px;letter-spacing:.45px;">0x00000</span>
<span class="t n" style="left:112.82px;top:1003.29px;">3<i>.</i>40</span>
<span class="t n" style="left:236.38px;top:1003.29px;">0<i>.</i><b>1</b>6</span>
<span class="t n" style="left:348.50px;top:1003.29px;"><u>7</u>49 640</span>
<div class="sq" style="left:469px;top:1010px;width:20px;height:20px;background:#b8b870;"></div>
<span class="t" style="left:501.00px;top:1003.29px;font-size:26px;letter-spacing:.45px;">sjtu::map</span>
<span class="t n" style="left:116.48px;top:1043.29px;">3<i>.</i><b>1</b>4</span>
<span class="t n" style="left:237.74px;top:1043.29px;"><b>1</b><i>.</i>8<b>1</b></span>
<span class="t n" style="left:327.04px;top:1043.29px;">8 40<b>1</b> 569</span>
<div class="sq" style="left:469px;top:1050px;width:20px;height:20px;background:#0088d0;"></div>
<span class="t" style="left:501.00px;top:1043.29px;font-size:26px;letter-spacing:.45px;">sjtu::map</span>
<span class="t n" style="left:112.82px;top:1083.29px;">2<i>.</i>55</span>
<span class="t n" style="left:232.72px;top:1083.29px;">2<i>.</i>55</span>
<span class="t n" style="left:313.50px;top:1083.29px;">3<u>7</u> <u>7</u>4<u>7</u> 502</span>
<div class="sq" style="left:469px;top:1090px;width:20px;height:20px;background:#c8c038;"></div>
<span class="t" style="left:501.00px;top:1083.29px;font-size:26px;letter-spacing:.45px;">0x00000</span>
<span class="t n" style="left:114.18px;top:1123.29px;">2<i>.</i>5<b>1</b></span>
<span class="t n" style="left:234.78px;top:1123.29px;">0<i>.</i>4<u>7</u></span>
<span class="t n" style="left:326.80px;top:1123.29px;">3 <u>7</u>66 54<b>1</b></span>
<div class="sq" style="left:469px;top:1130px;width:20px;height:20px;background:#8070c8;"></div>
<span class="t" style="left:501.00px;top:1123.29px;font-size:26px;letter-spacing:.45px;">sjtu::map</span>
<span class="t n" style="left:112.82px;top:1163.29px;">2<i>.</i>50</span>
<span class="t n" style="left:232.72px;top:1163.29px;">2<i>.</i>50</span>
<span class="t n" style="left:307.32px;top:1163.29px;">28 490 295</span>
<div class="sq" style="left:469px;top:1170px;width:20px;height:20px;background:#00c088;"></div>
<span class="t" style="left:501.00px;top:1163.29px;font-size:26px;letter-spacing:.45px;">Compare</span>
<span class="t n" style="left:118.54px;top:1203.29px;"><b>1</b><i>.</i>9<u>7</u></span>
<span class="t n" style="left:236.38px;top:1203.29px;"><b>1</b><i>.</i>85</span>
<span class="t n" style="left:325.44px;top:1203.29px;">5 456 <u>7</u>86</span>
<div class="sq" style="left:469px;top:1210px;width:20px;height:20px;background:#00a8c8;"></div>
<span class="t" style="left:501.00px;top:1203.29px;font-size:26px;letter-spacing:.45px;">0x00000</span>
<span class="t n" style="left:116.48px;top:1243.29px;"><b>1</b><i>.</i>89</span>
<span class="t n" style="left:232.72px;top:1243.29px;">0<i>.</i>08</span>
<span class="t n" style="left:350.10px;top:1243.29px;"><b>1</b>50 000</span>
<div class="sq" style="left:469px;top:1250px;width:20px;height:20px;background:#00b0c8;"></div>
<span class="t" style="left:501.00px;top:1243.29px;font-size:26px;letter-spacing:.45px;">0x00000</span>
<span class="t n" style="left:116.48px;top:1283.29px;"><b>1</b><i>.</i>55</span>
<span class="t n" style="left:232.72px;top:1283.29px;">0<i>.</i>08</span>
<span class="t n" style="left:325.44px;top:1283.29px;">6 056 <u>7</u>86</span>
<div class="sq" style="left:469px;top:1290px;width:20px;height:20px;background:#00c848;"></div>
<span class="t" style="left:501.00px;top:1283.29px;font-size:26px;letter-spacing:.45px;">_dl_find_</span>
<span class="t n" style="left:118.54px;top:1323.29px;"><b>1</b><i>.</i>4<u>7</u></span>
<span class="t n" style="left:238.44px;top:1323.29px;"><b>1</b><i>.</i>4<u>7</u></span>
<span class="t n" style="left:325.44px;top:1323.29px;">6 056 <u>7</u>86</span>
<div class="sq" style="left:469px;top:1330px;width:20px;height:20px;background:#00c848;"></div>
<span class="t" style="left:501.00px;top:1323.29px;font-size:26px;letter-spacing:.45px;">_dl_find_</span>
</div>
<span class="t" style="top:160.19px;font-size:26px;color:#fff;font-weight:bold;letter-spacing:0.723px;left:628.00px;-webkit-text-stroke-width:0.3px;">__cxa_throw</span>
<div style="left:628px;top:221px;width:1848px;height:687px;background:#383838;border:2px solid #4a4a4a;border-radius:8px;box-sizing:border-box;border-top-width:1px;"></div>
<div style="left:628px;top:923px;width:1848px;height:686px;background:#383838;border:2px solid #4a4a4a;border-radius:8px;box-sizing:border-box;border-bottom-width:1px;"></div>
<div style="left:1547px;top:910px;width:10px;height:10px;background:#4b4b4b;border-radius:50%;"></div>
<div style="left:634px;top:252px;width:1835px;height:648px;background:#171717;border:1px solid #101010;box-sizing:border-box;"></div>
<div class="hdr" style="left:635px;top:253px;width:1833px;height:35px;"></div>
<div style="left:792px;top:257px;width:2px;height:26px;background:#b0b0b0;"></div>
<div style="left:916px;top:257px;width:2px;height:26px;background:#b0b0b0;"></div>
<div style="left:1038px;top:257px;width:2px;height:26px;background:#b0b0b0;"></div>
<div style="left:2466px;top:257px;width:2px;height:26px;background:#dcdcdc;"></div>
<span class="t" style="top:258.08px;font-size:22px;color:#f0f0f0;letter-spacing:0.605px;left:644.80px;">Ir</span>
<span class="t" style="top:258.08px;font-size:22px;color:#f0f0f0;letter-spacing:0.407px;left:802.50px;">Ir per call</span>
<span class="t" style="top:258.08px;font-size:22px;color:#f0f0f0;letter-spacing:0.660px;left:926.60px;">Count</span>
<span class="t" style="top:258.08px;font-size:22px;color:#f0f0f0;letter-spacing:0.517px;left:1048.30px;">Caller</span>
<div style="left:634px;top:928px;width:1835px;height:649px;background:#171717;border:1px solid #101010;box-sizing:border-box;"></div>
<div class="hdr" style="left:635px;top:929px;width:1833px;height:35px;"></div>
<div style="left:788px;top:933px;width:2px;height:26px;background:#b0b0b0;"></div>
<div style="left:912px;top:933px;width:2px;height:26px;background:#b0b0b0;"></div>
<div style="left:1032px;top:933px;width:2px;height:26px;background:#b0b0b0;"></div>
<div style="left:2466px;top:933px;width:2px;height:26px;background:#dcdcdc;"></div>
<span class="t" style="top:934.08px;font-size:22px;color:#f0f0f0;letter-spacing:0.605px;left:644.80px;">Ir</span>
<span class="t" style="top:934.08px;font-size:22px;color:#f0f0f0;letter-spacing:0.407px;left:798.60px;">Ir per call</span>
<span class="t" style="top:934.08px;font-size:22px;color:#f0f0f0;letter-spacing:0.660px;left:922.70px;">Count</span>
<span class="t" style="top:934.08px;font-size:22px;color:#f0f0f0;letter-spacing:0.561px;left:1042.40px;">Callee</span>
<div style="left:646px;top:298px;width:42px;height:20px;background:#0000ff;box-sizing:border-box;border-top:2px solid #6a6aff;border-left:2px solid #6a6aff;border-bottom:2px solid #0000b0;border-right:1px solid #0000b0;"></div>
<div style="left:688px;top:312px;width:2px;height:6px;background:#fff;"></div>
<span class="t n" style="left:714.36px;top:291.29px;">86<i>.</i>83</span>
<span class="t n" style="left:827.82px;top:291.29px;">85 <u>7</u><b>1</b>3</span>
<span class="t n" style="left:932.00px;top:291.29px;"><b>1</b>49 999</span>
<div class="sq" style="left:1050px;top:298px;width:20px;height:20px;background:#96c864;"></div>
<span class="t" style="top:294.99px;font-size:26px;color:#fff;letter-spacing:0.392px;left:1082.50px;">sjtu::map&lt;Integer, std::__cxx11::basic_string&lt;char, std::char_traits&lt;char&gt;, std::allocator&lt;char&gt; &gt;, Compare&gt;::find...</span>
<span class="t n" style="left:730.42px;top:331.29px;">0<i>.</i>00</span>
<span class="t n" style="left:825.76px;top:331.29px;"><b>1</b>2 964</span>
<span class="t n" style="left:1017.00px;top:331.29px;"><b>1</b></span>
<div class="sq" style="left:1050px;top:338px;width:20px;height:20px;background:#00c832;"></div>
<span class="t" style="top:334.99px;font-size:26px;color:#fff;letter-spacing:0.392px;left:1082.50px;">sjtu::map&lt;Integer, std::__cxx11::basic_string&lt;char, std::char_traits&lt;char&gt;, std::allocator&lt;char&gt; &gt;, Compare&gt;::at(I...</span>
<div style="left:646px;top:974px;width:42px;height:20px;background:#0000ff;box-sizing:border-box;border-top:2px solid #6a6aff;border-left:2px solid #6a6aff;border-bottom:2px solid #0000b0;border-right:1px solid #0000b0;"></div>
<div style="left:688px;top:988px;width:2px;height:6px;background:#fff;"></div>
<span class="t n" style="left:712.02px;top:967.29px;">86<i>.</i><u>7</u>6</span>
<span class="t n" style="left:818.30px;top:967.29px;">85 645</span>
<span class="t n" style="left:925.70px;top:967.29px;"><b>1</b>50 000</span>
<div class="sq" style="left:1044px;top:974px;width:20px;height:20px;background:#1ec832;"></div>
<span class="t" style="top:970.99px;font-size:26px;color:#fff;letter-spacing:0.226px;left:1075.20px;">_Unwind_RaiseException (libgcc_s.so.1)</span>
<span class="t n" style="left:726.02px;top:1007.29px;">0<i>.</i>03</span>
<span class="t n" style="left:875.54px;top:1007.29px;">2<u>7</u></span>
<span class="t n" style="left:925.70px;top:1007.29px;"><b>1</b>50 000</span>
<div class="sq" style="left:1044px;top:1014px;width:20px;height:20px;background:#cfa84a;"></div>
<span class="t" style="top:1010.99px;font-size:26px;color:#fff;letter-spacing:0.573px;left:1075.20px;">__cxa_init_primary_exception (libstdc++.so.6.0.30)</span>
<span class="t n" style="left:726.02px;top:1047.29px;">0<i>.</i>02</span>
<span class="t n" style="left:877.14px;top:1047.29px;"><b>1</b>9</span>
<span class="t n" style="left:925.70px;top:1047.29px;"><b>1</b>50 000</span>
<div class="sq" style="left:1044px;top:1054px;width:20px;height:20px;background:#00c800;"></div>
<span class="t" style="top:1050.99px;font-size:26px;color:#fff;letter-spacing:0.584px;left:1075.20px;">__cxa_get_globals (libstdc++.so.6.0.30)</span>
<span class="t n" style="left:726.02px;top:1087.29px;">0<i>.</i>00</span>
<span class="t n" style="left:859.48px;top:1087.29px;"><u>7</u>39</span>
<span class="t n" style="left:1009.34px;top:1087.29px;">3</span>
<div class="sq" style="left:1044px;top:1094px;width:20px;height:20px;background:#d28c8c;"></div>
<span class="t" style="top:1090.99px;font-size:26px;color:#fff;letter-spacing:0.660px;left:1075.20px;">_dl_runtime_resolve_xsave (ld-linux-x86-64.so.2: dl-trampoline.h)</span>
<div style="left:1012px;top:201px;width:1074px;height:40px;background:linear-gradient(#6b6b6b,#5f5f5f);border-radius:10px;overflow:hidden;box-shadow:inset 0 1px 0 #858585,0 1px 0 rgba(0,0,0,.3);"></div>
<span class="t" style="top:208.19px;font-size:26px;color:#e4e4e4;letter-spacing:0.039px;left:1031.20px;">Types</span>
<div style="left:1126px;top:201px;width:132px;height:40px;background:linear-gradient(#0a6bf2,#0560e2);box-shadow:inset 0 1px 0 #5a9df6,0 1px 0 #0a3a80;"></div>
<span class="t" style="top:208.19px;font-size:26px;color:#fff;letter-spacing:0.116px;left:1150.90px;">Callers</span>
<span class="t" style="top:208.19px;font-size:26px;color:#e4e4e4;letter-spacing:0.147px;left:1282.30px;">All Callers</span>
<div style="left:1423.5px;top:202px;width:1px;height:38px;background:#5a5a5a;"></div>
<span class="t" style="top:208.19px;font-size:26px;color:#e4e4e4;letter-spacing:-0.009px;left:1451.00px;">Callee Map</span>
<div style="left:1606px;top:202px;width:1px;height:38px;background:#5a5a5a;"></div>
<span class="t" style="top:208.19px;font-size:26px;color:#e4e4e4;letter-spacing:0.188px;left:1633.00px;">Source Code</span>
<div style="left:1810.4px;top:202px;width:1px;height:38px;background:#5a5a5a;"></div>
<span class="t" style="top:208.19px;font-size:26px;color:#e4e4e4;letter-spacing:0.249px;left:1837.00px;">Control Flow Graph</span>
<div style="left:1062px;top:1589px;width:976px;height:40px;background:linear-gradient(#6b6b6b,#5f5f5f);border-radius:10px;overflow:hidden;box-shadow:inset 0 1px 0 #858585,0 1px 0 rgba(0,0,0,.3);"></div>
<span class="t" style="top:1596.19px;font-size:26px;color:#8a8a8a;letter-spacing:0.057px;left:1080.50px;">Parts</span>
<div style="left:1166px;top:1589px;width:136px;height:40px;background:linear-gradient(#0a6bf2,#0560e2);box-shadow:inset 0 1px 0 #5a9df6,0 1px 0 #0a3a80;"></div>
<span class="t" style="top:1596.19px;font-size:26px;color:#fff;letter-spacing:0.016px;left:1190.30px;">Callees</span>
<span class="t" style="top:1596.19px;font-size:26px;color:#e4e4e4;letter-spacing:-0.061px;left:1327.00px;">Call Graph</span>
<div style="left:1473.7px;top:1590px;width:1px;height:38px;background:#5a5a5a;"></div>
<span class="t" style="top:1596.19px;font-size:26px;color:#e4e4e4;letter-spacing:0.087px;left:1500.10px;">All Callees</span>
<div style="left:1646px;top:1590px;width:1px;height:38px;background:#5a5a5a;"></div>
<span class="t" style="top:1596.19px;font-size:26px;color:#e4e4e4;letter-spacing:0.157px;left:1672.20px;">Caller Map</span>
<div style="left:1822.3px;top:1590px;width:1px;height:38px;background:#5a5a5a;"></div>
<span class="t" style="top:1596.19px;font-size:26px;color:#e4e4e4;letter-spacing:0.236px;left:1848.70px;">Machine Code</span>
<div style="left:1007px;top:221px;width:1px;height:20px;background:#505050;"></div>
<div style="left:2090px;top:221px;width:1px;height:20px;background:#505050;"></div>
<div style="left:1056px;top:1589px;width:1px;height:20px;background:#505050;"></div>
<div style="left:2041.5px;top:1589px;width:1px;height:20px;background:#505050;"></div>
<div style="left:0px;top:1642px;width:2488px;height:1px;background:#6a6a6a;"></div>
<div style="left:0px;top:1643px;width:2488px;height:53px;background:#323232;"></div>
<span class="t" style="top:1656.49px;font-size:26px;color:#f2f2f2;letter-spacing:0.838px;left:3.90px;">callgrind.out.2035462</span>
<span class="t" style="top:1656.49px;font-size:26px;color:#f2f2f2;letter-spacing:-0.845px;left:278.80px;">[1]</span>
<span class="t" style="top:1656.49px;font-size:26px;color:#f2f2f2;left:316.50px;">-</span>
<span class="t" style="top:1656.49px;font-size:26px;color:#f2f2f2;letter-spacing:-0.127px;left:335.30px;">Total</span>
<span class="t" style="top:1656.49px;font-size:26px;color:#f2f2f2;letter-spacing:0.649px;left:398.00px;">Instruction</span>
<span class="t" style="top:1656.49px;font-size:26px;color:#f2f2f2;letter-spacing:-0.050px;left:532.80px;">Fetch</span>
<span class="t" style="top:1656.49px;font-size:26px;color:#f2f2f2;letter-spacing:0.207px;left:606.40px;">Cost:</span>
<span class="t" style="top:1656.49px;font-size:26px;color:#f2f2f2;letter-spacing:1.005px;left:676.30px;">14 806 845 368</span>
</div>
<div id="edge"></div>
</body></html>
